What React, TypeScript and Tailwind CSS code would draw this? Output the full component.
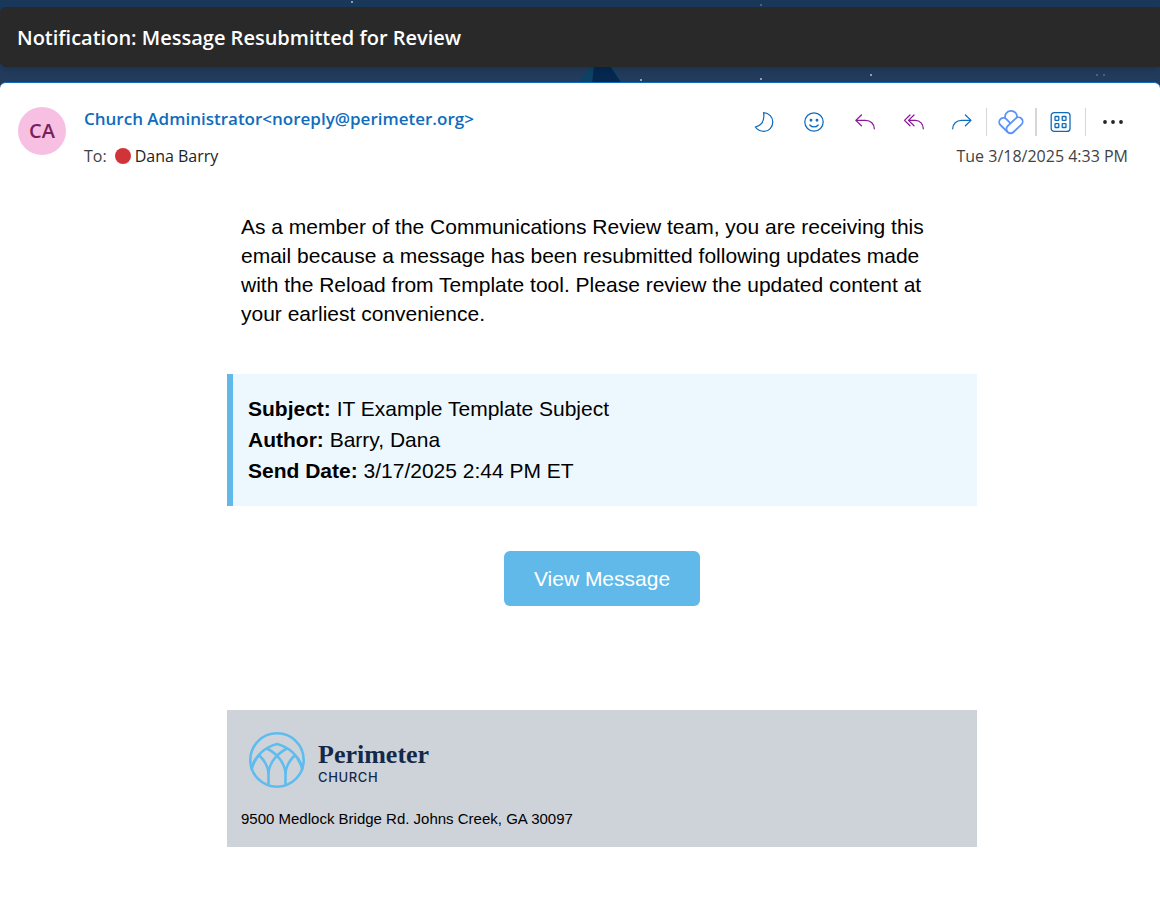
import type { ReactNode } from 'react';

interface MessageDetail {
  label: string;
  value: string;
}

const details: MessageDetail[] = [
  { label: 'Subject:', value: 'IT Example Template Subject' },
  { label: 'Author:', value: 'Barry, Dana' },
  { label: 'Send Date:', value: '3/17/2025 2:44 PM ET' },
];

const IconButton = ({ label, className, children }: { label: string; className: string; children: ReactNode }) => (
  <button type="button" aria-label={label} className={`flex h-7 items-center justify-center ${className}`}>
    <svg
      width="24"
      height="24"
      viewBox="0 0 24 24"
      fill="none"
      stroke="currentColor"
      strokeWidth="1.25"
      strokeLinecap="round"
      strokeLinejoin="round"
    >
      {children}
    </svg>
  </button>
);

// Night sky that shows above and below the subject bar
const Sky = () => (
  <svg className="absolute inset-0 h-full w-full" aria-hidden="true">
    <path d="M578 84 L584 74 L592 66 H612 L622 84 Z" fill="#0d4264" />
    <path d="M592 84 L594 66 H610 L622 84 Z" fill="#06284f" />
    <g fill="#b4c3d3">
      <circle cx="352" cy="2" r="1" />
      <circle cx="641" cy="80" r="1" />
      <circle cx="761" cy="79" r="1" />
      <circle cx="871" cy="75" r="1" />
    </g>
    <g fill="#5b7189">
      <circle cx="761" cy="5" r="1" />
      <circle cx="1097" cy="75" r="1" />
      <circle cx="1104" cy="75" r="1" />
    </g>
  </svg>
);

const SubjectBar = () => (
  <header className="relative bg-gradient-to-b from-[#183759] to-[#233c5c] pt-[7px] pb-[15px]">
    <Sky />
    <div className="relative rounded-l-md bg-[#292929] px-[17px] pt-[17px] pb-[15px] shadow-md">
      <h1 className="text-[20px] leading-7 font-semibold text-white">Notification: Message Resubmitted for Review</h1>
    </div>
  </header>
);

const Toolbar = () => (
  <div className="flex items-center" role="toolbar" aria-label="Message actions">
    <IconButton label="Snooze" className="w-[51px] text-[#0f6cbd]">
      <path d="M11.6 2.6 C17 3 20.8 7 20.8 12 C20.8 17.2 17 21.3 12 21.3 C8.3 21.3 5.2 19.6 3.3 17 C9.5 15.5 12.8 10.5 11.6 2.6 Z" />
    </IconButton>
    <IconButton label="React" className="w-[50px] text-[#0f6cbd]">
      <circle cx="12" cy="12" r="9.2" />
      <path d="M7.8 15 C10 17.6 14 17.6 16.2 15" />
      <circle cx="9" cy="10.2" r="0.8" fill="currentColor" />
      <circle cx="15" cy="10.2" r="0.8" fill="currentColor" />
    </IconButton>
    <IconButton label="Reply" className="w-[51px] text-[#881798]">
      <path d="M8.4 5 L2.8 10.4 L8.4 15.8 M3 10.4 H12.5 C17.6 10.4 21.3 14 21.3 18.8" />
    </IconButton>
    <IconButton label="Reply all" className="w-[47px] text-[#881798]">
      <path d="M8 5 L2.5 10.4 L8 15.8 M12 5 L6.5 10.4 L12 15.8 M6.7 10.4 H13.5 C18 10.4 21.3 14 21.3 18.8" />
    </IconButton>
    <IconButton label="Forward" className="w-[49px] text-[#0f6cbd]">
      <path d="M15.4 5 L21 10.4 L15.4 15.8 M20.8 10.4 H11.5 C6.4 10.4 2.7 14 2.7 18.8" />
    </IconButton>
    <div className="flex h-7 w-[49px] items-center justify-center border-l border-[#d6d6d6]">
      <button type="button" aria-label="Viva" className="text-[#5b93fb]">
        <svg width="26" height="26" viewBox="0 0 26 26" fill="none" stroke="currentColor" strokeWidth="1.8" strokeLinejoin="round">
          <path d="M7.2 9.2 A6 6 0 1 1 19 8.5" />
          <path d="M9.6 23 L2.4 16 A4.1 4.1 0 0 1 8.4 10.2 L12.5 14.3" />
          <path d="M9.6 17.2 L17.5 9.6 A4.15 4.15 0 0 1 23.5 15.4 L15.6 23 A4.2 4.2 0 0 1 9.6 23 A4.1 4.1 0 0 1 9.6 17.2 Z" />
        </svg>
      </button>
    </div>
    <div className="flex h-7 w-[50px] items-center justify-center border-l-2 border-[#d6d6d6]">
      <button type="button" aria-label="Apps" className="text-[#0f6cbd]">
        <svg width="24" height="24" viewBox="0 0 24 24" fill="none" stroke="currentColor" strokeWidth="1.3">
          <rect x="2.2" y="2.6" width="18.8" height="18.8" rx="3" />
          <rect x="6" y="6.5" width="3.8" height="3.8" rx="0.6" />
          <rect x="13.2" y="6.5" width="3.8" height="3.8" rx="0.6" />
          <rect x="6" y="13.7" width="3.8" height="3.8" rx="0.6" />
          <rect x="13.2" y="13.7" width="3.8" height="3.8" rx="0.6" />
        </svg>
      </button>
    </div>
    <div className="flex h-7 w-[43px] items-center justify-end border-l border-[#d6d6d6]">
      <button type="button" aria-label="More actions" className="text-[#242424]">
        <svg width="30" height="24" viewBox="0 0 30 24" fill="currentColor">
          <circle cx="7" cy="12" r="1.9" />
          <circle cx="15" cy="12" r="1.9" />
          <circle cx="23" cy="12" r="1.9" />
        </svg>
      </button>
    </div>
  </div>
);

const MessageHeader = () => (
  <div className="flex items-start pt-6 pr-8 pl-[18px]">
    <div className="flex size-12 shrink-0 items-center justify-center rounded-full bg-[#f7c0e3] text-[20px] font-semibold text-[#7a1f5c]">
      CA
    </div>
    <div className="ml-[18px] flex-1">
      <a href="mailto:noreply@perimeter.org" className="block text-[17px] leading-6 font-semibold text-[#0f6cbd]">
        Church Administrator&lt;noreply@perimeter.org&gt;
      </a>
      <div className="mt-[13px] flex items-center text-[16px] leading-6 text-[#424242]">
        <span>To:</span>
        <span className="mr-1 ml-2 size-4 rounded-full bg-[#d13438]" />
        <span className="text-[#242424]">Dana Barry</span>
      </div>
    </div>
    <div className="flex flex-col items-end pt-px">
      <Toolbar />
      <time className="mt-2 text-[16px] leading-6 text-[#424242]">Tue 3/18/2025 4:33 PM</time>
    </div>
  </div>
);

const ChurchLogo = () => (
  <div className="flex items-center gap-3 text-[#14294a]">
    <svg width="58" height="58" viewBox="0 0 58 58" fill="none" stroke="#5fbcee" strokeWidth="2.6" aria-hidden="true">
      <circle cx="29" cy="29" r="26.7" />
      <path d="M3.5 37 C7 25 17 16 29 13 C41 16 51 25 54.5 37" />
      <path d="M19 17.5 C28 22 37.5 32 37.5 43 V54" />
      <path d="M39 17.5 C30 22 20.5 32 20.5 43 V54" />
      <path d="M11 24 C16 29 20.5 35 20.5 43" />
      <path d="M11 24 C7 29 4.5 34 3.5 39" />
      <path d="M47 24 C42 29 37.5 35 37.5 43" />
      <path d="M47 24 C51 29 53.5 34 54.5 39" />
    </svg>
    <div className="pt-1.5">
      <div className="font-['Liberation_Serif',serif] text-[26px] leading-7 font-bold">Perimeter</div>
      <div className="font-[Inter,sans-serif] text-[13px] leading-4 font-medium tracking-wider">CHURCH</div>
    </div>
  </div>
);

const MessageBody = () => (
  <main className="mt-11 pr-10 pl-[84px] font-['Liberation_Sans',Arial,sans-serif] text-black">
    <div className="mx-auto max-w-[750px]">
      <p className="pr-10 pl-[14px] text-[21px] leading-[29px]">
        As a member of the Communications Review team, you are receiving this email because a message has been
        resubmitted following updates made with the Reload from Template tool. Please review the updated content at
        your earliest convenience.
      </p>

      <div className="mt-[46px] border-l-[6px] border-[#60b9e8] bg-[#edf8fe] px-[15px] pt-[19px] pb-5 text-[21px] leading-[31px]">
        {details.map(({ label, value }) => (
          <p key={label}>
            <strong>{label}</strong> {value}
          </p>
        ))}
      </div>

      <div className="mt-[45px] text-center">
        <a href="#message" className="inline-block rounded-md bg-[#60b9e8] px-[30px] py-[13px] text-[21px] leading-[29px] text-white">
          View Message
        </a>
      </div>

      <footer className="mt-[104px] bg-[#ced3da] px-[14px] pt-[21px] pb-[17px]">
        <div className="pl-[7px]">
          <ChurchLogo />
        </div>
        <p className="mt-[19px] text-[15px] leading-[22px]">9500 Medlock Bridge Rd. Johns Creek, GA 30097</p>
      </footer>
    </div>
  </main>
);

const App = () => (
  <div className="min-h-screen bg-white font-['Segoe_UI','Open_Sans',sans-serif]">
    <SubjectBar />
    <div className="bg-[#233c5c]">
      <div className="rounded-t-md border-t border-[#0f6cbd] bg-white pb-14">
        <MessageHeader />
        <MessageBody />
      </div>
    </div>
  </div>
);

export default App;
